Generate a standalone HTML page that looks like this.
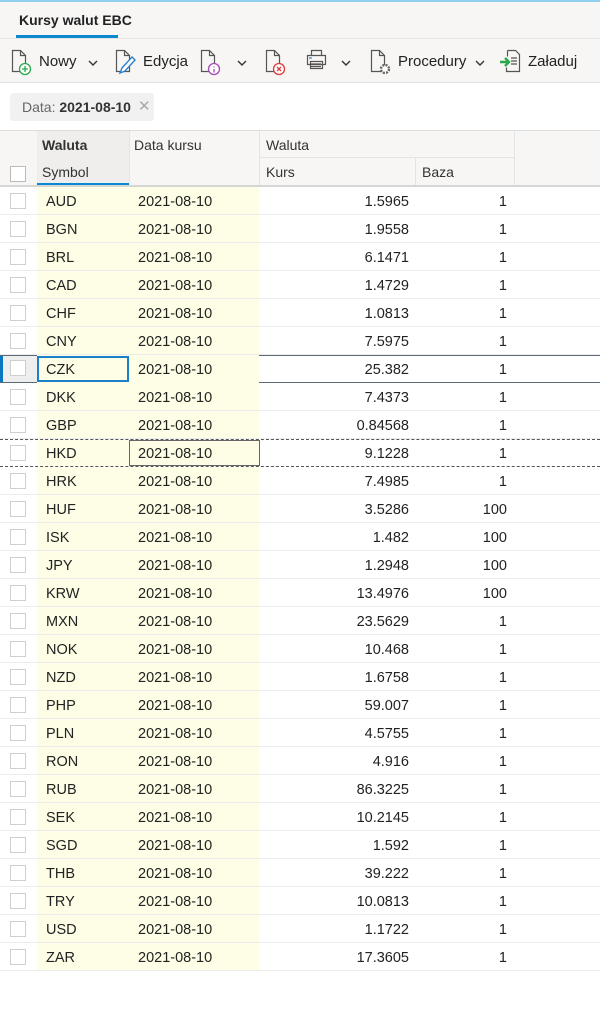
<!DOCTYPE html>
<html><head><meta charset="utf-8"><style>
*{margin:0;padding:0;box-sizing:border-box}
body{width:600px;height:1018px;background:#fff;font-family:"Liberation Sans",Arial,sans-serif;color:#222;position:relative;overflow:hidden}
.abs{position:absolute}
.top{left:0;top:0;width:600px;height:83px;background:#f7f6f5;border-top:2px solid #8fd0ef}
.tab{left:19px;top:12px;font-size:14px;font-weight:bold;color:#222}
.tabline{left:16px;top:35px;width:102px;height:3px;background:#0a88d0}
.sep{left:0;top:38px;width:600px;height:1px;background:#e6e5e3}
.sep2{left:0;top:82px;width:600px;height:1px;background:#e2e1df}
.tb{font-size:15px;color:#222;top:53px}
.chip{left:10px;top:93px;width:144px;height:28px;background:#f1f1f1;border-radius:3px;font-size:14px;line-height:28px;padding-left:12px;color:#666;white-space:nowrap}
.chip b{color:#333;font-weight:bold}
.hdr{left:0;top:130px;width:600px;height:57px;background:#f7f6f5;border-top:1px solid #ddd;border-bottom:2px solid #d6d6d6}
.h{font-size:14px;color:#333}
.row{position:absolute;left:0;width:600px;height:28px;border-bottom:1px solid #ececec;font-size:14.5px}
.row .y{position:absolute;left:37px;top:0;width:222px;height:27px;background:#fefee6}
.row .cb{position:absolute;left:10px;top:6px;width:16px;height:16px;border:1px solid #cfcfcf;background:#fff}
.row span{position:absolute;top:7px}
.s{left:46px}.d{left:138px}.k{right:191px;text-align:right}.b{right:93px}
</style></head><body>
<div class="abs top"></div>
<div class="abs tab">Kursy walut EBC</div>
<div class="abs tabline"></div>
<div class="abs sep"></div>
<div class="abs sep2"></div>
<!-- icons -->
<svg class="abs" style="left:0;top:44px" width="600" height="34">
<g fill="none" stroke="#555" stroke-width="1.2">
<path d="M12.5 6.5h8l5 5v16h-13z M20.5 6.5v5h5"/>
<path d="M116.5 6.5h8l5 5v16h-13z M124.5 6.5v5h5"/>
<path d="M201.5 6.5h8l5 5v16h-13z M209.5 6.5v5h5"/>
<path d="M266.5 6.5h8l5 5v16h-13z M274.5 6.5v5h5"/>
<path d="M371.5 6.5h8l5 5v16h-13z M379.5 6.5v5h5"/>
<path d="M311.5 6.5h10v5h-10z M307.5 11.5h18v9h-18z M310.5 17.5h12v7h-12z M311 20h10 M311 22.5h10"/>
<path d="M507.5 6.5h8l4 4v17h-13v-4 M507.5 6.5v6 M511 14h6 M511 17h6 M511 20h6"/>
<path d="M89 17l4 4 4-4 M238 17l4 4 4-4 M342 17l4 4 4-4 M476 17l4 4 4-4" stroke="#333" stroke-width="1.4"/>
</g>
<circle cx="25" cy="25" r="5.5" fill="#fff" stroke="#2aa84a" stroke-width="1.3"/><path d="M25 22v6M22 25h6" stroke="#2aa84a" stroke-width="1.3"/>
<path d="M120 29l2-5 10-11 3 3-10 11z" fill="#fff" stroke="#2b7fd0" stroke-width="1.4"/>
<circle cx="214" cy="25" r="5.5" fill="#fff" stroke="#a44bb5" stroke-width="1.3"/><path d="M214 22.5v1M214 25v3.5" stroke="#a44bb5" stroke-width="1.3"/>
<circle cx="279" cy="25" r="5.5" fill="#fff" stroke="#e03a3a" stroke-width="1.3"/><path d="M277 23l4 4M281 23l-4 4" stroke="#e03a3a" stroke-width="1.3"/>
<circle cx="385" cy="25" r="4" fill="#fff" stroke="#666" stroke-width="2.4" stroke-dasharray="2 1.2"/>
<path d="M309 14h3" stroke="#2b7fd0" stroke-width="1.2"/>
<path d="M500 18h9M505 14l4 4-4 4" stroke="#2aa84a" stroke-width="2.4" fill="none"/>
</svg>
<div class="abs tb" style="left:39px">Nowy</div>
<div class="abs tb" style="left:143px">Edycja</div>
<div class="abs tb" style="left:398px">Procedury</div>
<div class="abs tb" style="left:528px">Załaduj</div>
<div class="abs chip">Data: <b>2021-08-10</b><span style="position:absolute;left:128px;top:0;color:#aaa;font-size:15px">✕</span></div>
<div class="abs hdr"></div>
<div class="abs" style="left:37px;top:131px;width:92px;height:54px;background:#efeeed"></div>
<div class="abs" style="left:37px;top:183px;width:92px;height:2px;background:#0a88d0"></div>
<div class="abs" style="left:129px;top:131px;width:1px;height:54px;background:#e4e4e4"></div>
<div class="abs" style="left:259px;top:131px;width:1px;height:54px;background:#e4e4e4"></div>
<div class="abs" style="left:259px;top:157px;width:255px;height:1px;background:#e4e4e4"></div>
<div class="abs" style="left:415px;top:158px;width:1px;height:27px;background:#e4e4e4"></div>
<div class="abs" style="left:514px;top:131px;width:1px;height:54px;background:#e4e4e4"></div>
<div class="abs" style="left:10px;top:166px;width:16px;height:16px;border:1px solid #bbb;background:#fff"></div>
<div class="abs h" style="left:42px;top:137px;font-weight:bold">Waluta</div>
<div class="abs h" style="left:42px;top:164px">Symbol</div>
<div class="abs h" style="left:134px;top:137px">Data kursu</div>
<div class="abs h" style="left:266px;top:137px">Waluta</div>
<div class="abs h" style="left:266px;top:164px">Kurs</div>
<div class="abs h" style="left:422px;top:164px">Baza</div>
<div class="row" style="top:187px"><div class="y"></div><div class="cb"></div><span class="s">AUD</span><span class="d">2021-08-10</span><span class="k">1.5965</span><span class="b">1</span></div>
<div class="row" style="top:215px"><div class="y"></div><div class="cb"></div><span class="s">BGN</span><span class="d">2021-08-10</span><span class="k">1.9558</span><span class="b">1</span></div>
<div class="row" style="top:243px"><div class="y"></div><div class="cb"></div><span class="s">BRL</span><span class="d">2021-08-10</span><span class="k">6.1471</span><span class="b">1</span></div>
<div class="row" style="top:271px"><div class="y"></div><div class="cb"></div><span class="s">CAD</span><span class="d">2021-08-10</span><span class="k">1.4729</span><span class="b">1</span></div>
<div class="row" style="top:299px"><div class="y"></div><div class="cb"></div><span class="s">CHF</span><span class="d">2021-08-10</span><span class="k">1.0813</span><span class="b">1</span></div>
<div class="row" style="top:327px"><div class="y"></div><div class="cb"></div><span class="s">CNY</span><span class="d">2021-08-10</span><span class="k">7.5975</span><span class="b">1</span></div>
<div class="row" style="top:355px;border-top:1px solid #5a6a78;border-bottom:1px solid #5a6a78"><div class="y" style="top:-1px;height:28px"></div><div class="abs" style="left:0;top:0;width:37px;height:26px;background:#eee"></div><div class="abs" style="left:0;top:0;width:3px;height:26px;background:#0a78c0"></div><div class="cb" style="top:4px"></div><div class="abs" style="left:37px;top:0;width:92px;height:26px;border:2px solid #1a80c8"></div><span class="s" style="top:6px">CZK</span><span class="d" style="top:6px">2021-08-10</span><span class="k" style="top:6px">25.382</span><span class="b" style="top:6px">1</span></div>
<div class="row" style="top:383px"><div class="y"></div><div class="cb"></div><span class="s">DKK</span><span class="d">2021-08-10</span><span class="k">7.4373</span><span class="b">1</span></div>
<div class="row" style="top:411px"><div class="y"></div><div class="cb"></div><span class="s">GBP</span><span class="d">2021-08-10</span><span class="k">0.84568</span><span class="b">1</span></div>
<div class="row" style="top:439px;border-top:1px dashed #555;border-bottom:1px dashed #555"><div class="y" style="top:0;height:26px"></div><div class="cb" style="top:5px"></div><div class="abs" style="left:129px;top:0;width:131px;height:26px;border:1px solid #666"></div><span class="s" style="top:6px">HKD</span><span class="d" style="top:6px">2021-08-10</span><span class="k" style="top:6px">9.1228</span><span class="b" style="top:6px">1</span></div>
<div class="row" style="top:467px"><div class="y"></div><div class="cb"></div><span class="s">HRK</span><span class="d">2021-08-10</span><span class="k">7.4985</span><span class="b">1</span></div>
<div class="row" style="top:495px"><div class="y"></div><div class="cb"></div><span class="s">HUF</span><span class="d">2021-08-10</span><span class="k">3.5286</span><span class="b">100</span></div>
<div class="row" style="top:523px"><div class="y"></div><div class="cb"></div><span class="s">ISK</span><span class="d">2021-08-10</span><span class="k">1.482</span><span class="b">100</span></div>
<div class="row" style="top:551px"><div class="y"></div><div class="cb"></div><span class="s">JPY</span><span class="d">2021-08-10</span><span class="k">1.2948</span><span class="b">100</span></div>
<div class="row" style="top:579px"><div class="y"></div><div class="cb"></div><span class="s">KRW</span><span class="d">2021-08-10</span><span class="k">13.4976</span><span class="b">100</span></div>
<div class="row" style="top:607px"><div class="y"></div><div class="cb"></div><span class="s">MXN</span><span class="d">2021-08-10</span><span class="k">23.5629</span><span class="b">1</span></div>
<div class="row" style="top:635px"><div class="y"></div><div class="cb"></div><span class="s">NOK</span><span class="d">2021-08-10</span><span class="k">10.468</span><span class="b">1</span></div>
<div class="row" style="top:663px"><div class="y"></div><div class="cb"></div><span class="s">NZD</span><span class="d">2021-08-10</span><span class="k">1.6758</span><span class="b">1</span></div>
<div class="row" style="top:691px"><div class="y"></div><div class="cb"></div><span class="s">PHP</span><span class="d">2021-08-10</span><span class="k">59.007</span><span class="b">1</span></div>
<div class="row" style="top:719px"><div class="y"></div><div class="cb"></div><span class="s">PLN</span><span class="d">2021-08-10</span><span class="k">4.5755</span><span class="b">1</span></div>
<div class="row" style="top:747px"><div class="y"></div><div class="cb"></div><span class="s">RON</span><span class="d">2021-08-10</span><span class="k">4.916</span><span class="b">1</span></div>
<div class="row" style="top:775px"><div class="y"></div><div class="cb"></div><span class="s">RUB</span><span class="d">2021-08-10</span><span class="k">86.3225</span><span class="b">1</span></div>
<div class="row" style="top:803px"><div class="y"></div><div class="cb"></div><span class="s">SEK</span><span class="d">2021-08-10</span><span class="k">10.2145</span><span class="b">1</span></div>
<div class="row" style="top:831px"><div class="y"></div><div class="cb"></div><span class="s">SGD</span><span class="d">2021-08-10</span><span class="k">1.592</span><span class="b">1</span></div>
<div class="row" style="top:859px"><div class="y"></div><div class="cb"></div><span class="s">THB</span><span class="d">2021-08-10</span><span class="k">39.222</span><span class="b">1</span></div>
<div class="row" style="top:887px"><div class="y"></div><div class="cb"></div><span class="s">TRY</span><span class="d">2021-08-10</span><span class="k">10.0813</span><span class="b">1</span></div>
<div class="row" style="top:915px"><div class="y"></div><div class="cb"></div><span class="s">USD</span><span class="d">2021-08-10</span><span class="k">1.1722</span><span class="b">1</span></div>
<div class="row" style="top:943px"><div class="y"></div><div class="cb"></div><span class="s">ZAR</span><span class="d">2021-08-10</span><span class="k">17.3605</span><span class="b">1</span></div>
</body></html>
